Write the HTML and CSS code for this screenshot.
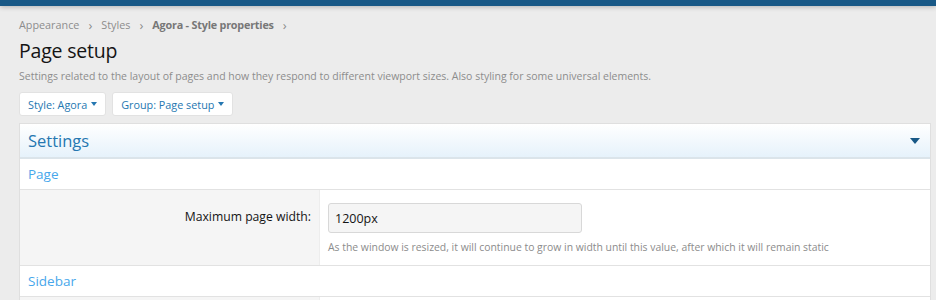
FILE: index.html
```html
<!DOCTYPE html>
<html lang="en">
<head>
    <meta charset="UTF-8">
    <title>Page setup</title>
    <link rel="stylesheet" href="styles.css">
</head>
<body>
    <div class="top-bar"></div>
    <div class="page">
        <div class="breadcrumb">
            <span>Appearance</span><span class="sep">&rsaquo;</span>
            <span>Styles</span><span class="sep">&rsaquo;</span>
            <span class="bold">Agora - Style properties</span><span class="sep">&rsaquo;</span>
        </div>
        <h1 class="title">Page setup</h1>
        <p class="description">Settings related to the layout of pages and how they respond to different viewport sizes. Also styling for some universal elements.</p>
        <div class="filters">
            <button class="filter">Style: Agora <span class="caret"></span></button>
            <button class="filter">Group: Page setup <span class="caret"></span></button>
        </div>
        <div class="block">
            <div class="block-header">
                <span>Settings</span>
                <span class="toggle"></span>
            </div>
            <div class="section-title">Page</div>
            <div class="form-row">
                <label class="form-label">Maximum page width:</label>
                <div class="form-field">
                    <input class="input" type="text" value="1200px">
                    <div class="hint">As the window is resized, it will continue to grow in width until this value, after which it will remain static</div>
                </div>
            </div>
            <div class="section-title">Sidebar</div>
            <div class="form-row">
                <label class="form-label"></label>
                <div class="form-field"></div>
            </div>
        </div>
    </div>
</body>
</html>
```

FILE: styles.css
```css
* { margin: 0; padding: 0; box-sizing: border-box; }
body {
    font-family: "Open Sans", "Noto Sans", sans-serif;
    background: #ececec;
    color: #141414;
    overflow: hidden;
}
.top-bar {
    height: 6px;
    background: #185886;
    box-shadow: 0 1px 5px rgba(0, 0, 0, 0.25);
}
.page { padding: 10px 5px 0 19px; }
.breadcrumb {
    font-size: 10.8px;
    color: #8c8c8c;
    display: flex;
    gap: 9px;
    height: 17px;
    align-items: center;
}
.breadcrumb .bold { font-weight: 700; color: #777; letter-spacing: -0.2px; }
.breadcrumb .sep { font-size: 13px; }
.title {
    font-size: 19.5px;
    font-weight: 400;
    margin-top: 5px;
    line-height: 26px;
    letter-spacing: -0.2px;
}
.description {
    font-size: 10.5px;
    color: #8c8c8c;
    margin-top: 4px;
    line-height: 16px;
}
.filters { display: flex; gap: 6px; margin-top: 8px; }
.filter {
    font-family: inherit;
    background: #fff;
    border: 1px solid #e2e2e2;
    border-radius: 3px;
    color: #2577b1;
    font-size: 10.8px;
    height: 24px;
    padding: 0 8px;
    display: flex;
    align-items: center;
    gap: 4px;
}
.caret {
    width: 0;
    height: 0;
    border-left: 3.5px solid transparent;
    border-right: 3.5px solid transparent;
    border-top: 4px solid #2577b1;
}
.block {
    margin-top: 7px;
    background: #fff;
    border: 1px solid #dfdfdf;
    border-bottom: none;
}
.block-header {
    height: 35px;
    padding: 0 10px 0 8px;
    display: flex;
    justify-content: space-between;
    align-items: center;
    font-size: 16.5px;
    color: #2577b1;
    background: linear-gradient(to bottom, #ffffff, #e6f2fb);
    border-bottom: 2px solid #dbe4ea;
}
.toggle {
    width: 0;
    height: 0;
    border-left: 5.5px solid transparent;
    border-right: 5.5px solid transparent;
    border-top: 6px solid #185886;
}
.section-title {
    height: 31px;
    padding: 0 8px;
    display: flex;
    align-items: center;
    font-size: 13.5px;
    color: #47a7eb;
    border-bottom: 1px solid #e2e2e2;
}
.form-row {
    display: grid;
    grid-template-columns: 300px 1fr;
    border-bottom: 1px solid #e2e2e2;
}
.form-label {
    background: #f5f5f5;
    text-align: right;
    font-size: 12.2px;
    color: #141414;
    padding: 18px 8px 0 0;
    border-right: 1px solid #ededed;
}
.form-field { padding: 13px 8px 11px 8px; min-height: 20px; }
.input {
    font-family: inherit;
    width: 254px;
    height: 30px;
    border: 1px solid #d8d8d8;
    border-radius: 3px;
    background: #f5f5f5;
    padding: 0 6px;
    font-size: 12.5px;
    color: #141414;
}
.hint {
    font-size: 10.4px;
    color: #8c8c8c;
    margin-top: 7px;
    line-height: 14px;
}
```
